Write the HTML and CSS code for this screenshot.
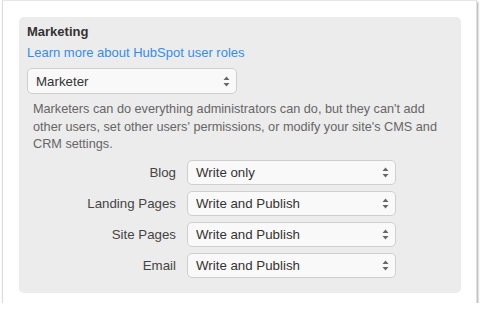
FILE: index.html
```html
<!DOCTYPE html>
<html lang="en">
<head>
    <meta charset="UTF-8">
    <title>Marketing role</title>
    <link rel="stylesheet" href="styles.css">
</head>
<body>
    <div class="card">
        <div class="panel">
            <h3>Marketing</h3>
            <a class="link" href="#">Learn more about HubSpot user roles</a>
            <div class="select-wrap role">
                <select>
                    <option>Marketer</option>
                </select>
                <svg class="arrows" width="7" height="11" viewBox="0 0 7 11"><path d="M3.5 0.5L6.5 4H0.5Z M3.5 10.5L6.5 7H0.5Z" fill="#666"/></svg>
            </div>
            <p class="desc">Marketers can do everything administrators can do, but they can't add other users, set other users' permissions, or modify your site's CMS and CRM settings.</p>
            <div class="perms">
                <label>Blog</label>
                <div class="select-wrap">
                    <select><option>Write only</option></select>
                    <svg class="arrows" width="7" height="11" viewBox="0 0 7 11"><path d="M3.5 0.5L6.5 4H0.5Z M3.5 10.5L6.5 7H0.5Z" fill="#666"/></svg>
                </div>
                <label>Landing Pages</label>
                <div class="select-wrap">
                    <select><option>Write and Publish</option></select>
                    <svg class="arrows" width="7" height="11" viewBox="0 0 7 11"><path d="M3.5 0.5L6.5 4H0.5Z M3.5 10.5L6.5 7H0.5Z" fill="#666"/></svg>
                </div>
                <label>Site Pages</label>
                <div class="select-wrap">
                    <select><option>Write and Publish</option></select>
                    <svg class="arrows" width="7" height="11" viewBox="0 0 7 11"><path d="M3.5 0.5L6.5 4H0.5Z M3.5 10.5L6.5 7H0.5Z" fill="#666"/></svg>
                </div>
                <label>Email</label>
                <div class="select-wrap">
                    <select><option>Write and Publish</option></select>
                    <svg class="arrows" width="7" height="11" viewBox="0 0 7 11"><path d="M3.5 0.5L6.5 4H0.5Z M3.5 10.5L6.5 7H0.5Z" fill="#666"/></svg>
                </div>
            </div>
        </div>
    </div>
</body>
</html>
```

FILE: styles.css
```css
body {
    font-family: "Liberation Sans", Arial, sans-serif;
    background-color: #fff;
    margin: 0;
    padding: 0;
}

.card {
    margin: 0 3px 0 2px;
    height: 303px;
    box-sizing: border-box;
    padding: 16px 15px 0 16px;
    background: #fff;
    border-top: 1px solid #e6e6e6;
    border-left: 1px solid #dcdcdc;
    border-right: 1px solid #e0e0e0;
    box-shadow: 1px 2px 2px rgba(0, 0, 0, 0.35);
}

.panel {
    background: #ececec;
    border-radius: 5px;
    padding: 6px 8px 12px 8px;
    height: 276px;
    box-sizing: border-box;
}

h3 {
    margin: 0;
    font-size: 13px;
    line-height: 18px;
    font-weight: bold;
    color: #333;
}

.link {
    display: block;
    margin-top: 3px;
    font-size: 13px;
    line-height: 18px;
    color: #338def;
    text-decoration: none;
}

.select-wrap {
    position: relative;
    width: 209px;
    height: 25px;
}

.select-wrap.role {
    width: 210px;
    height: 26px;
    margin-top: 6px;
}

select {
    -webkit-appearance: none;
    appearance: none;
    width: 100%;
    height: 100%;
    margin: 0;
    padding: 0 20px 0 8px;
    border: 1px solid #cfcfcf;
    border-radius: 5px;
    background: #f9f9f9;
    font-family: inherit;
    font-size: 13.3px;
    color: #333;
}

.arrows {
    position: absolute;
    right: 7px;
    top: 50%;
    margin-top: -5px;
}

.desc {
    width: 405px;
    margin: 7px 0 0 6px;
    font-size: 12.7px;
    line-height: 17.6px;
    color: #666;
}

.perms {
    display: grid;
    grid-template-columns: 149px 209px;
    column-gap: 11px;
    row-gap: 6px;
    margin-top: 6px;
    align-items: center;
}

.perms label {
    text-align: right;
    font-size: 13.3px;
    color: #444;
}
```
